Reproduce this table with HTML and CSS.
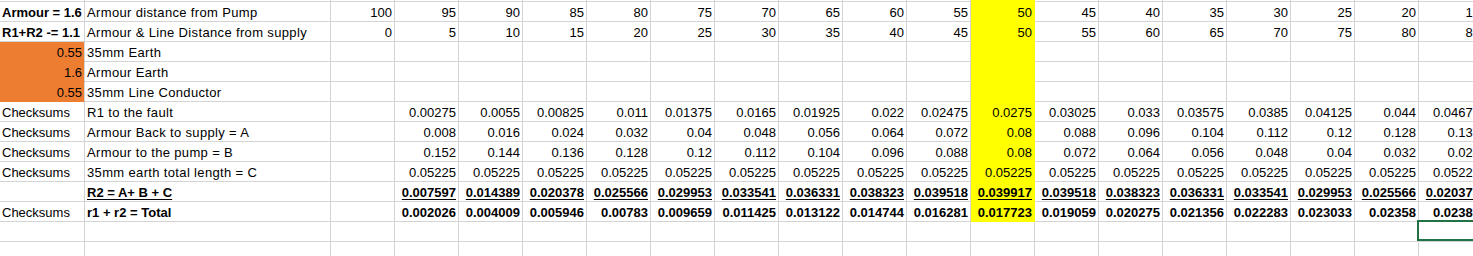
FILE: index.html
```html
<!DOCTYPE html>
<html lang="en">
<head>
<meta charset="utf-8">
<title>Armour calculation sheet</title>
<link rel="stylesheet" href="styles.css">
</head>
<body>
<div class="sheet">
  <div class="row top">
    <div class="c"></div><div class="c"></div><div class="c"></div><div class="c"></div><div class="c"></div><div class="c"></div><div class="c"></div><div class="c"></div><div class="c"></div><div class="c"></div><div class="c"></div><div class="c"></div><div class="c y"></div><div class="c"></div><div class="c"></div><div class="c"></div><div class="c"></div><div class="c"></div><div class="c"></div><div class="c"></div>
  </div>
  <div class="row">
    <div class="c l b">Armour = 1.6</div><div class="c l lbl">Armour distance from Pump</div>
    <div class="c">100</div><div class="c">95</div><div class="c">90</div><div class="c">85</div><div class="c">80</div><div class="c">75</div><div class="c">70</div><div class="c">65</div><div class="c">60</div><div class="c">55</div><div class="c y">50</div><div class="c">45</div><div class="c">40</div><div class="c">35</div><div class="c">30</div><div class="c">25</div><div class="c">20</div><div class="c">15</div>
  </div>
  <div class="row">
    <div class="c l b">R1+R2 -= 1.1</div><div class="c l lbl">Armour &amp; Line Distance from supply</div>
    <div class="c">0</div><div class="c">5</div><div class="c">10</div><div class="c">15</div><div class="c">20</div><div class="c">25</div><div class="c">30</div><div class="c">35</div><div class="c">40</div><div class="c">45</div><div class="c y">50</div><div class="c">55</div><div class="c">60</div><div class="c">65</div><div class="c">70</div><div class="c">75</div><div class="c">80</div><div class="c">85</div>
  </div>
  <div class="row">
    <div class="c or">0.55</div><div class="c l lbl">35mm Earth</div>
    <div class="c"></div><div class="c"></div><div class="c"></div><div class="c"></div><div class="c"></div><div class="c"></div><div class="c"></div><div class="c"></div><div class="c"></div><div class="c"></div><div class="c y"></div><div class="c"></div><div class="c"></div><div class="c"></div><div class="c"></div><div class="c"></div><div class="c"></div><div class="c"></div>
  </div>
  <div class="row">
    <div class="c or">1.6</div><div class="c l lbl">Armour Earth</div>
    <div class="c"></div><div class="c"></div><div class="c"></div><div class="c"></div><div class="c"></div><div class="c"></div><div class="c"></div><div class="c"></div><div class="c"></div><div class="c"></div><div class="c y"></div><div class="c"></div><div class="c"></div><div class="c"></div><div class="c"></div><div class="c"></div><div class="c"></div><div class="c"></div>
  </div>
  <div class="row">
    <div class="c or">0.55</div><div class="c l lbl">35mm Line Conductor</div>
    <div class="c"></div><div class="c"></div><div class="c"></div><div class="c"></div><div class="c"></div><div class="c"></div><div class="c"></div><div class="c"></div><div class="c"></div><div class="c"></div><div class="c y"></div><div class="c"></div><div class="c"></div><div class="c"></div><div class="c"></div><div class="c"></div><div class="c"></div><div class="c"></div>
  </div>
  <div class="row">
    <div class="c l">Checksums</div><div class="c l lbl">R1 to the fault</div>
    <div class="c"></div><div class="c">0.00275</div><div class="c">0.0055</div><div class="c">0.00825</div><div class="c">0.011</div><div class="c">0.01375</div><div class="c">0.0165</div><div class="c">0.01925</div><div class="c">0.022</div><div class="c">0.02475</div><div class="c y">0.0275</div><div class="c">0.03025</div><div class="c">0.033</div><div class="c">0.03575</div><div class="c">0.0385</div><div class="c">0.04125</div><div class="c">0.044</div><div class="c">0.04675</div>
  </div>
  <div class="row">
    <div class="c l">Checksums</div><div class="c l lbl">Armour Back to supply = A</div>
    <div class="c"></div><div class="c">0.008</div><div class="c">0.016</div><div class="c">0.024</div><div class="c">0.032</div><div class="c">0.04</div><div class="c">0.048</div><div class="c">0.056</div><div class="c">0.064</div><div class="c">0.072</div><div class="c y">0.08</div><div class="c">0.088</div><div class="c">0.096</div><div class="c">0.104</div><div class="c">0.112</div><div class="c">0.12</div><div class="c">0.128</div><div class="c">0.136</div>
  </div>
  <div class="row">
    <div class="c l">Checksums</div><div class="c l lbl">Armour to the pump = B</div>
    <div class="c"></div><div class="c">0.152</div><div class="c">0.144</div><div class="c">0.136</div><div class="c">0.128</div><div class="c">0.12</div><div class="c">0.112</div><div class="c">0.104</div><div class="c">0.096</div><div class="c">0.088</div><div class="c y">0.08</div><div class="c">0.072</div><div class="c">0.064</div><div class="c">0.056</div><div class="c">0.048</div><div class="c">0.04</div><div class="c">0.032</div><div class="c">0.024</div>
  </div>
  <div class="row">
    <div class="c l">Checksums</div><div class="c l lbl">35mm earth total length = C</div>
    <div class="c"></div><div class="c">0.05225</div><div class="c">0.05225</div><div class="c">0.05225</div><div class="c">0.05225</div><div class="c">0.05225</div><div class="c">0.05225</div><div class="c">0.05225</div><div class="c">0.05225</div><div class="c">0.05225</div><div class="c y">0.05225</div><div class="c">0.05225</div><div class="c">0.05225</div><div class="c">0.05225</div><div class="c">0.05225</div><div class="c">0.05225</div><div class="c">0.05225</div><div class="c">0.05225</div>
  </div>
  <div class="row bu">
    <div class="c"></div><div class="c l"><span>R2 = A+ B + C</span></div>
    <div class="c"></div><div class="c"><span>0.007597</span></div><div class="c"><span>0.014389</span></div><div class="c"><span>0.020378</span></div><div class="c"><span>0.025566</span></div><div class="c"><span>0.029953</span></div><div class="c"><span>0.033541</span></div><div class="c"><span>0.036331</span></div><div class="c"><span>0.038323</span></div><div class="c"><span>0.039518</span></div><div class="c y"><span>0.039917</span></div><div class="c"><span>0.039518</span></div><div class="c"><span>0.038323</span></div><div class="c"><span>0.036331</span></div><div class="c"><span>0.033541</span></div><div class="c"><span>0.029953</span></div><div class="c"><span>0.025566</span></div><div class="c"><span>0.020378</span></div>
  </div>
  <div class="row">
    <div class="c l">Checksums</div><div class="c l b">r1 + r2 = Total</div>
    <div class="c"></div><div class="c b">0.002026</div><div class="c b">0.004009</div><div class="c b">0.005946</div><div class="c b">0.00783</div><div class="c b">0.009659</div><div class="c b">0.011425</div><div class="c b">0.013122</div><div class="c b">0.014744</div><div class="c b">0.016281</div><div class="c b y">0.017723</div><div class="c b">0.019059</div><div class="c b">0.020275</div><div class="c b">0.021356</div><div class="c b">0.022283</div><div class="c b">0.023033</div><div class="c b">0.02358</div><div class="c b">0.02388</div>
  </div>
  <div class="row">
    <div class="c"></div><div class="c"></div><div class="c"></div><div class="c"></div><div class="c"></div><div class="c"></div><div class="c"></div><div class="c"></div><div class="c"></div><div class="c"></div><div class="c"></div><div class="c"></div><div class="c"></div><div class="c"></div><div class="c"></div><div class="c"></div><div class="c"></div><div class="c"></div><div class="c"></div><div class="c active"><span class="sel"></span></div>
  </div>
  <div class="row">
    <div class="c"></div><div class="c"></div><div class="c"></div><div class="c"></div><div class="c"></div><div class="c"></div><div class="c"></div><div class="c"></div><div class="c"></div><div class="c"></div><div class="c"></div><div class="c"></div><div class="c"></div><div class="c"></div><div class="c"></div><div class="c"></div><div class="c"></div><div class="c"></div><div class="c"></div><div class="c"></div>
  </div>
</div>
</body>
</html>
```

FILE: styles.css
```css
html, body {
  margin: 0;
  padding: 0;
  background: #ffffff;
}

body {
  font-family: "Liberation Sans", Arial, sans-serif;
  font-size: 13px;
  color: #000000;
}

.sheet {
  width: 1473px;
  height: 256px;
  overflow: hidden;
}

.row {
  display: grid;
  grid-template-columns: 85px 246px repeat(18, 64px);
  height: 20px;
}

.row.top {
  height: 2px;
}

.c {
  box-sizing: border-box;
  border-right: 1px solid #d4d4d4;
  border-bottom: 1px solid #d4d4d4;
  padding: 1px 2px 0 2px;
  line-height: 19px;
  white-space: nowrap;
  overflow: hidden;
  text-align: right;
}

.row.top .c {
  padding: 0;
}

.l {
  text-align: left;
}

.b {
  font-weight: bold;
}

.lbl {
  letter-spacing: 0.35px;
}

.bu span {
  font-weight: bold;
  text-decoration: underline;
  text-underline-offset: 2px;
}

.or {
  background: #ed7d31;
  border-bottom-color: #ed7d31;
}

.y {
  background: #ffff00;
  border-right-color: #ffff00;
  border-bottom-color: #ffff00;
}

.active {
  position: relative;
  overflow: visible;
}

.sel {
  position: absolute;
  top: -2px;
  left: -2px;
  right: -2px;
  bottom: 0;
  border: 2px solid #217346;
}
```
